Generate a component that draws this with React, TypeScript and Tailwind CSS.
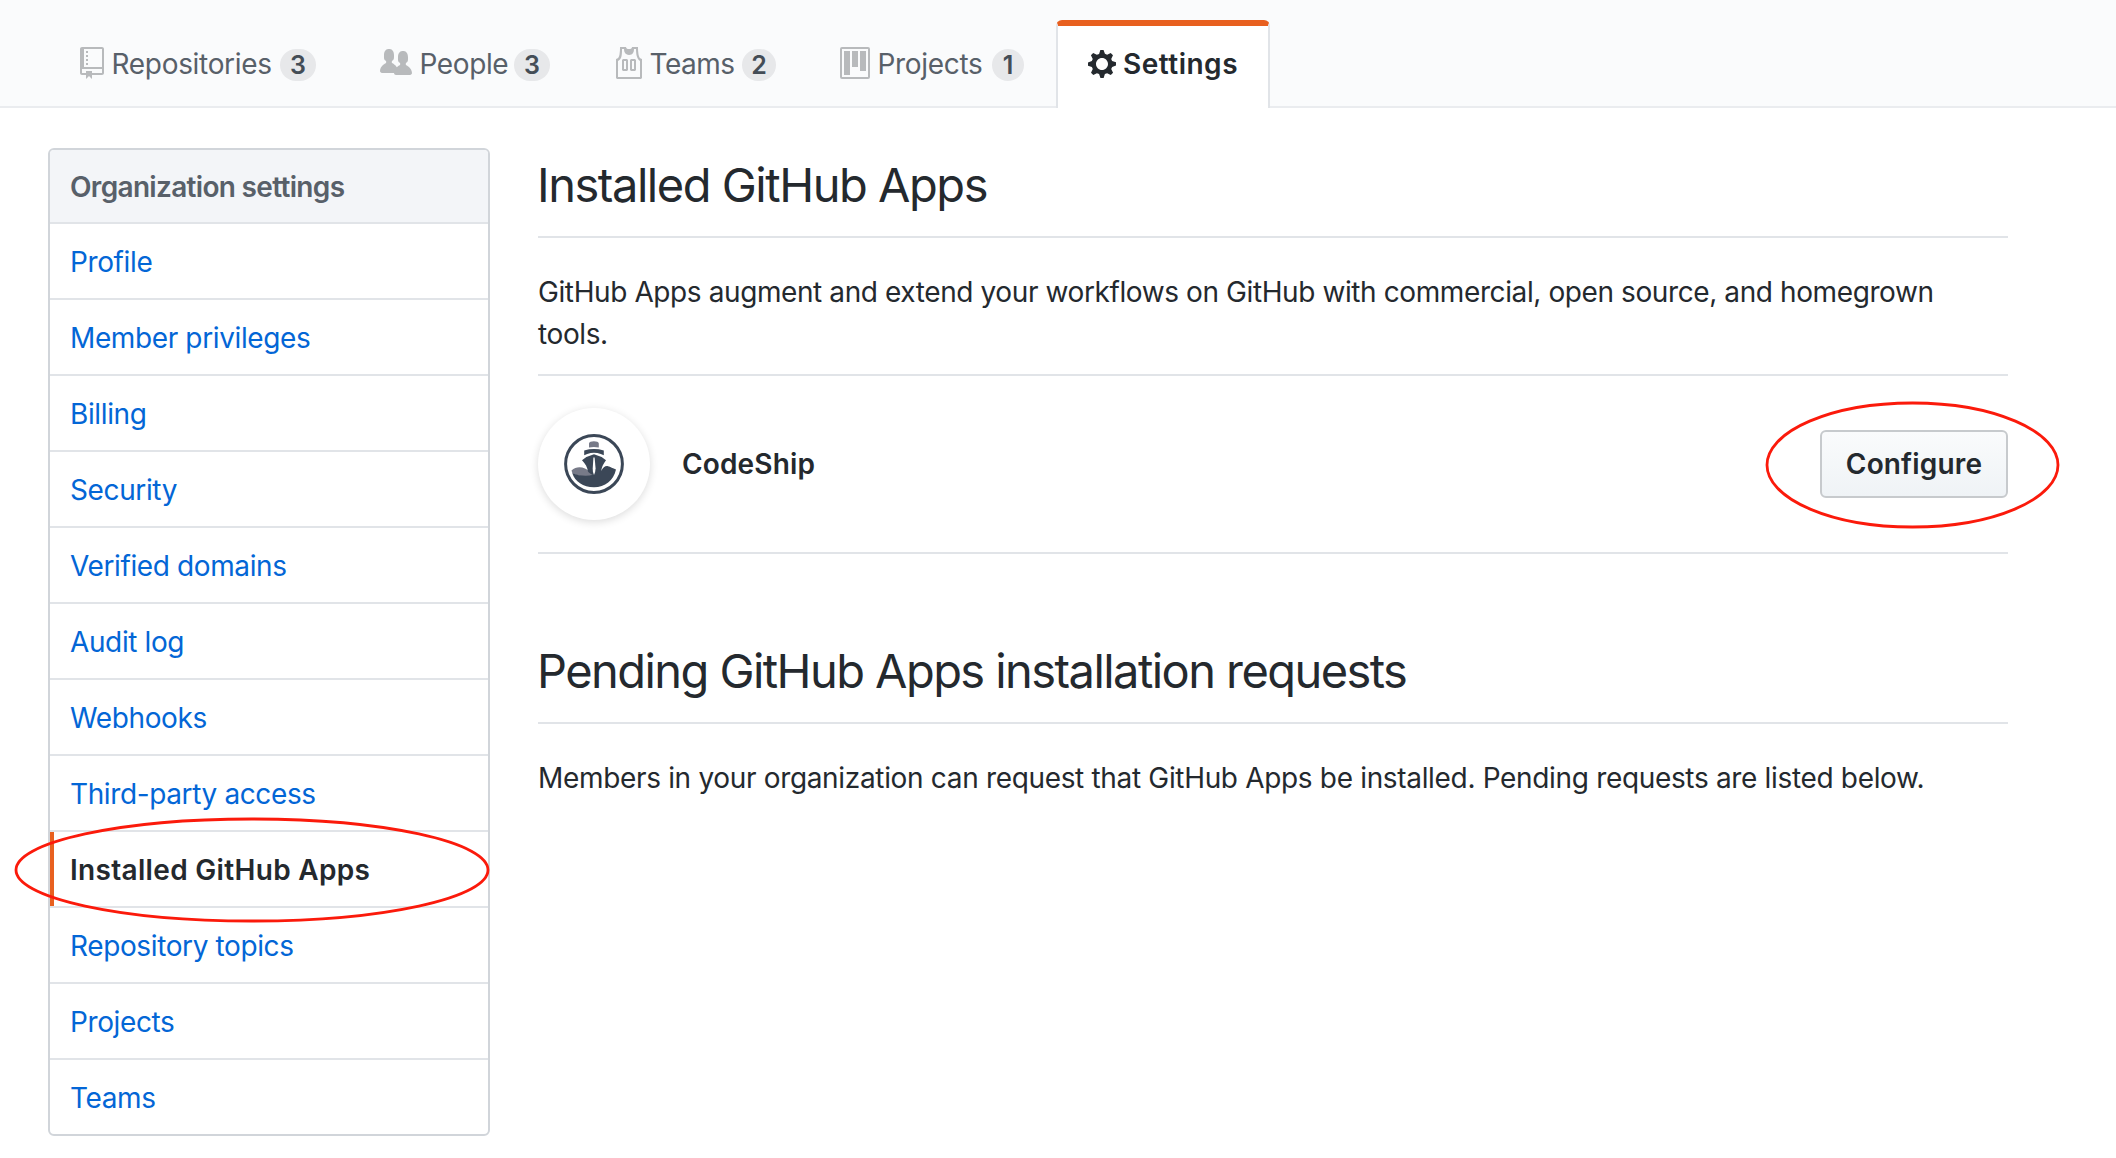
import React from "react";

type IconProps = { d: string; w: number; className?: string };

function Octicon({ d, w, className = "" }: IconProps) {
  return (
    <svg width={w * 2} height={32} viewBox={`0 0 ${w} 16`} fill="currentColor" className={`shrink-0 ${className}`}>
      <path fillRule="evenodd" d={d} />
    </svg>
  );
}

const icons = {
  repo: "M4 9H3V8h1v1zm0-3H3v1h1V6zm0-2H3v1h1V4zm0-2H3v1h1V2zm8-1v12c0 .55-.45 1-1 1H6v2l-1.5-1.5L3 16v-2H1c-.55 0-1-.45-1-1V1c0-.55.45-1 1-1h10c.55 0 1 .45 1 1zm-1 10H1v2h2v-1h3v1h5v-2zm0-10H2v9h9V1z",
  people:
    "M16 12.999c0 .439-.45 1-1 1H7.995c-.539 0-.994-.447-.995-.999H1c-.54 0-1-.561-1-1 0-2.634 3-4 3-4s.229-.409 0-1c-.841-.621-1.058-.59-1-3 .058-2.419 1.367-3 2.5-3s2.442.58 2.5 3c.058 2.41-.159 2.379-1 3-.229.59 0 1 0 1s1.549.711 2.42 2.088C9.196 9.369 10 8.999 10 8.999s.229-.409 0-1c-.841-.62-1.058-.59-1-3 .058-2.419 1.367-3 2.5-3s2.437.581 2.495 3c.059 2.41-.158 2.38-1 3-.229.59 0 1 0 1s3.005 1.366 3.005 4",
  jersey:
    "M4.5 6l-.5.5v5l.5.5h2l.5-.5v-5L6.5 6h-2zM6 11H5V7h1v4zm6.27-7.25C12.05 2.37 11.96 1.12 12 0H9.02c0 .27-.13.48-.39.69-.25.2-.63.3-1.13.3-.5 0-.88-.09-1.13-.3-.23-.2-.36-.42-.37-.69H3c.05 1.13-.03 2.38-.25 3.75C2.55 5.13 1.95 5.88 1 6v9.5l.5.5h12l.5-.5V6c-.95-.13-1.53-.88-1.73-2.25zM13 15H2V7c.89-.5 1.48-1.25 1.72-2.25S4.03 2.5 4 1h1c-.02.78.16 1.47.52 2.06.36.58 1.02.89 2 .94.98-.02 1.64-.33 2-.94.36-.59.5-1.28.48-2.06h1c.02 1.42.13 2.55.33 3.38.2.81.69 2 1.67 2.63V15zM8.5 6l-.5.5v5l.5.5h2l.5-.5v-5l-.5-.5h-2zm1.5 5H9V7h1v4z",
  project:
    "M10 12h3V2h-3v10zm-4-2h3V2H6v8zm-4 4h3V2H2v12zm-1 1h13V1H1v14zM14 0H1a1 1 0 0 0-1 1v14a1 1 0 0 0 1 1h13a1 1 0 0 0 1-1V1a1 1 0 0 0-1-1z",
  gear: "M14 8.77v-1.6l-1.94-.64-.45-1.09.88-1.84-1.13-1.13-1.81.91-1.09-.45-.69-1.92h-1.6l-.63 1.94-1.11.45-1.84-.88-1.13 1.13.91 1.81-.45 1.09L0 7.23v1.59l1.94.64.45 1.09-.88 1.84 1.13 1.13 1.81-.91 1.09.45.69 1.92h1.59l.63-1.94 1.11-.45 1.84.88 1.13-1.13-.92-1.81.47-1.09L14 8.75v.02zM7 11c-1.66 0-3-1.34-3-3s1.34-3 3-3 3 1.34 3 3-1.34 3-3 3z",
};

const tabs = [
  { label: "Repositories", count: 3, icon: icons.repo, w: 12, width: "w-[300px]", text: "tracking-[-0.31px]", badge: "w-9" },
  { label: "People", count: 3, icon: icons.people, w: 16, width: "w-[234px]", text: "tracking-[-0.4px]", badge: "w-9" },
  { label: "Teams", count: 2, icon: icons.jersey, w: 14, width: "w-[226px]", text: "tracking-[-0.5px]", badge: "w-[34px]" },
  { label: "Projects", count: 1, icon: icons.project, w: 15, width: "w-[248px]", text: "tracking-[-0.31px]", badge: "w-8" },
];

const menu = [
  "Profile",
  "Member privileges",
  "Billing",
  "Security",
  "Verified domains",
  "Audit log",
  "Webhooks",
  "Third-party access",
  "Installed GitHub Apps",
  "Repository topics",
  "Projects",
  "Teams",
];

function Tabs() {
  return (
    <nav className="flex h-[108px] items-end border-b-2 border-[#eaecef] bg-[#fafbfc] pl-12">
      {tabs.map((t) => (
        <a key={t.label} className={`flex h-[86px] items-center px-8 text-[#586069] ${t.width}`}>
          <Octicon d={t.icon} w={t.w} className="text-[#b8babc]" />
          <span className={`mt-0.5 ml-[7.5px] whitespace-nowrap ${t.text}`}>{t.label}</span>
          <span
            className={`mt-1 ml-auto flex h-8 shrink-0 items-center justify-center rounded-full bg-[#e7e8ea] text-[25px] leading-8 font-semibold text-[#444d56] ${t.badge}`}
          >
            {t.count}
          </span>
        </a>
      ))}
      <a className="-mb-0.5 flex h-[88px] w-[214px] items-center rounded-t-md border-x-2 border-t-6 border-x-[#e1e4e8] border-t-[#e8601f] bg-white pb-2 pl-[30px] font-semibold text-[#24292e]">
        <Octicon d={icons.gear} w={14} className="mt-0.5" />
        <span className="mt-0.5 ml-[7px] tracking-[0.5px]">Settings</span>
      </a>
    </nav>
  );
}

function Ring({ className, rx, ry }: { className: string; rx: number; ry: number }) {
  return (
    <svg
      className={`pointer-events-none absolute z-10 max-w-none ${className}`}
      width={rx * 2 + 4}
      height={ry * 2 + 4}
      fill="none"
    >
      <ellipse cx={rx + 2} cy={ry + 2} rx={rx} ry={ry} stroke="#fb1a0b" strokeWidth="2.8" />
    </svg>
  );
}

function Sidebar() {
  return (
    <aside className="flex h-[988px] w-[442px] shrink-0 flex-col rounded-md border-2 border-[#d1d5da]">
      <div className="flex h-[74px] shrink-0 items-center rounded-t border-b-2 border-[#e1e4e8] bg-[#f3f5f8] pt-0.5 pl-5 font-semibold tracking-[-0.68px] text-[#586069]">
        Organization settings
      </div>
      {menu.map((m) =>
        m === "Installed GitHub Apps" ? (
          <div key={m} className="relative flex h-[76px] shrink-0 items-center border-b-2 border-[#e1e4e8] font-semibold tracking-[0.32px] text-[#24292e]">
            <span className="mr-4 h-full w-1 bg-[#e8601f]" />
            <span className="pt-0.5">{m}</span>
            <Ring className="-top-[15px] -left-[36px]" rx={236} ry={51} />
          </div>
        ) : (
          <a key={m} className="flex h-[76px] shrink-0 items-center border-b-2 border-[#e1e4e8] pt-0.5 pl-5 tracking-[-0.38px] text-[#0366d6] last:h-[74px] last:border-b-0">
            {m}
          </a>
        ),
      )}
    </aside>
  );
}

function ShipLogo() {
  return (
    <svg width="60" height="60" viewBox="0 0 60 60">
      <circle cx="30" cy="30" r="28.4" fill="none" stroke="#3b4757" strokeWidth="3" />
      <path d="M25 13.500V9.500c0-3 9.800-3 9.800 0v4q-4.900-.9-9.800 0z" fill="#777a88" />
      <path d="M20.200 21.300v-4.800q9.800-2.800 19.600 0v4.800l-3-1.300q-6.800-2.600-13.600 0z" fill="#3b4757" />
      <path d="M7.500 36.500c4-3.800 9-4 13.500-2 3 1.500 6 4.500 9.500 6-6 3.500-15 2-22-1z" fill="#777a88" />
      <path
        d="M30 20.300q6.500 1.500 12 6c-2.800 3.500-4.300 7-4.800 10.700 2-3.500 4-5.400 6.800-4.800 2.500.6 4.800 2 8 3.300C49.500 46.500 41 53.300 30 53.300S11 47.500 8.300 39.300c7 2.700 15 3.300 20.700 1.500-2.500-.8-4-2-5-3.300-.7-4.200-2.500-7.700-6-11.200q5.500-4.500 12-6z"
        fill="#3b4757"
      />
      <path d="M29.400 23.500h1.200l1 11q-.2 4-1.600 6.500-1.400-2.500-1.300-6.500z" fill="#fff" />
    </svg>
  );
}

function Main() {
  return (
    <main className="w-[1470px] text-[#24292e]">
      <h2 className="h-[90px] border-b-2 border-[#e1e4e8] pt-[7px] text-[47px] leading-[60px] font-normal tracking-[-1.46px]">
        <span className="-ml-px">Installed GitHub Apps</span>
      </h2>
      <p className="mt-[33px] h-[103px] w-[1430px] leading-[42px] tracking-[-0.4px]">
        GitHub Apps augment and extend your workflows on GitHub with commercial, open source, and homegrown tools.
      </p>
      <div className="flex h-[180px] items-center border-y-2 border-[#e1e4e8]">
        <div className="flex size-28 items-center justify-center rounded-full bg-white shadow-[0_2px_8px_rgba(0,0,0,0.14)]">
          <ShipLogo />
        </div>
        <span className="ml-8 font-semibold tracking-[0.15px]">CodeShip</span>
        <div className="relative ml-auto">
          <button className="h-[68px] w-[188px] rounded-md border-2 border-[#c7cacd] bg-linear-to-b from-[#fafbfc] to-[#eff3f6] font-semibold tracking-[0.15px]">
            Configure
          </button>
          <Ring className="-top-[29.500px] -left-[55.500px]" rx={145.5} ry={62} />
        </div>
      </div>
      <h2 className="mt-20 h-[90px] border-b-2 border-[#e1e4e8] pt-[7px] text-[47px] leading-[60px] font-normal tracking-[-1.56px]">
        <span className="-ml-px">Pending GitHub Apps installation requests</span>
      </h2>
      <p className="mt-[33px] leading-[42px] whitespace-nowrap tracking-[-0.33px]">
        Members in your organization can request that GitHub Apps be installed. Pending requests are listed below.
      </p>
    </main>
  );
}

export default function App() {
  return (
    <div className="h-[1158px] w-[2116px] overflow-hidden bg-white font-['Inter',sans-serif] text-[28px]">
      <Tabs />
      <div className="flex gap-12 pt-10 pl-12">
        <Sidebar />
        <Main />
      </div>
    </div>
  );
}
